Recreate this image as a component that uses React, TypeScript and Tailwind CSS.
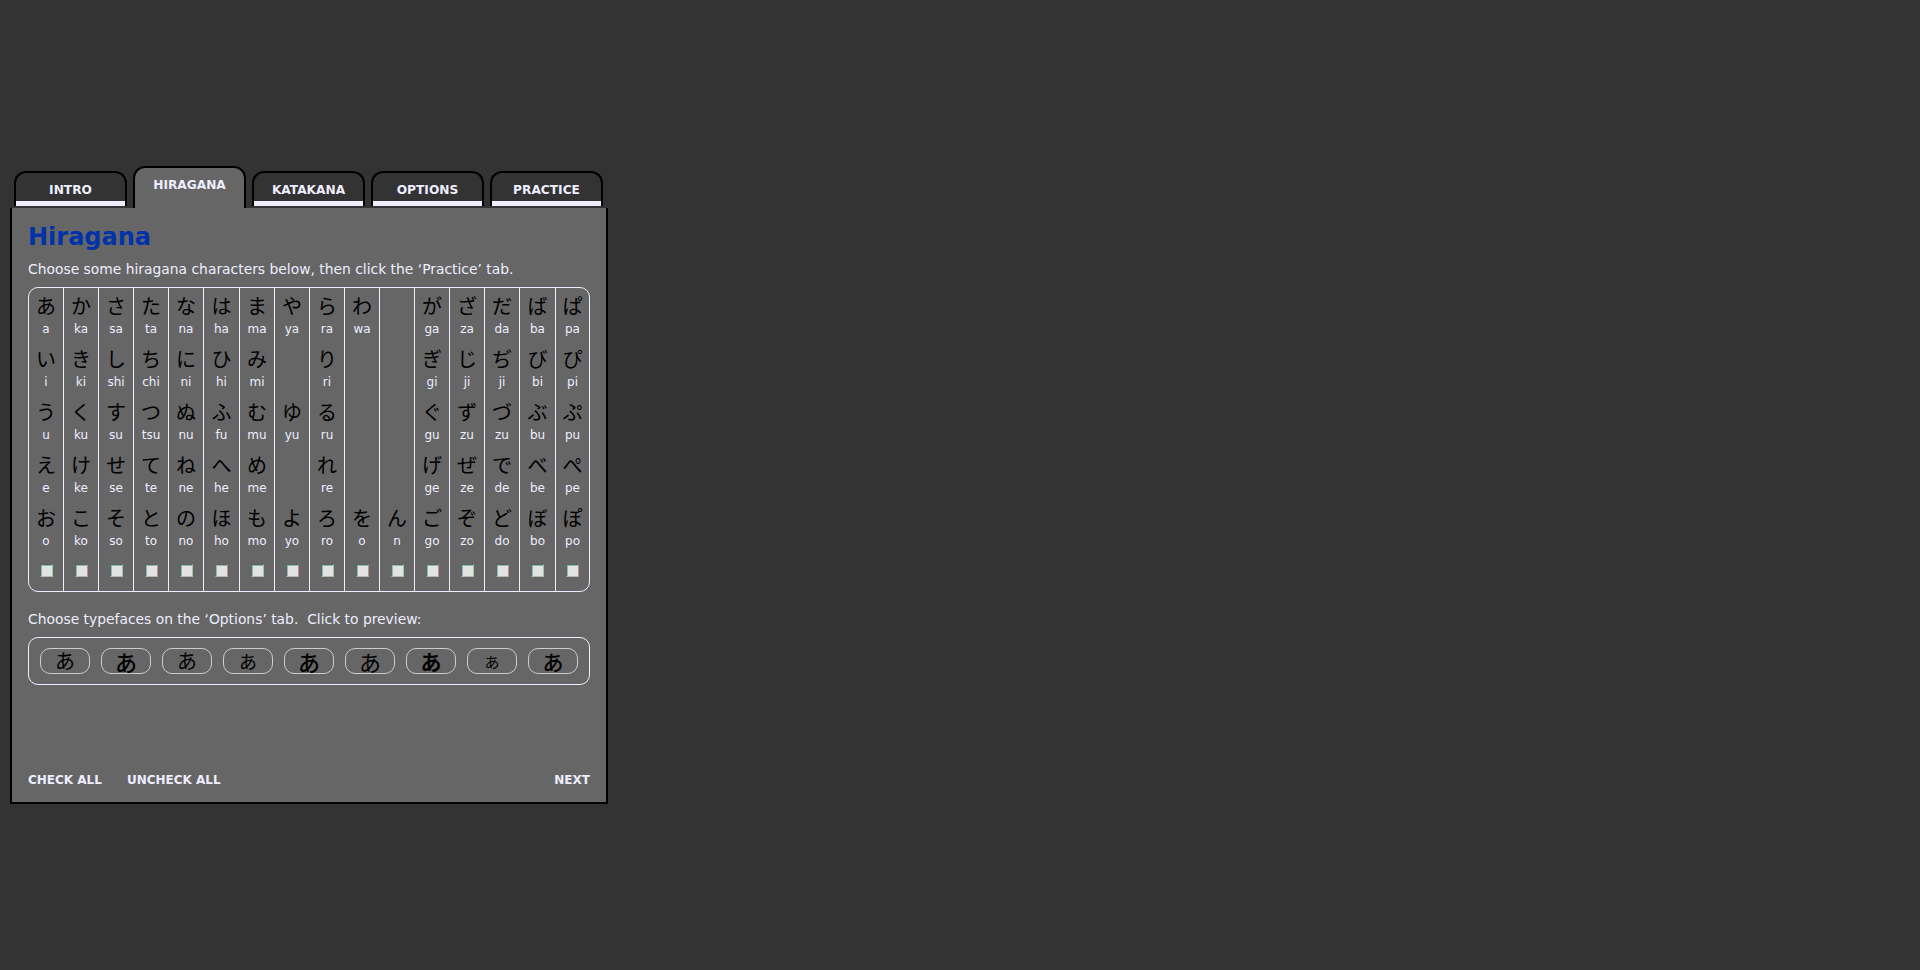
const rows: [string, string][][] = [
  [["あ","a"],["い","i"],["う","u"],["え","e"],["お","o"]],
  [["か","ka"],["き","ki"],["く","ku"],["け","ke"],["こ","ko"]],
  [["さ","sa"],["し","shi"],["す","su"],["せ","se"],["そ","so"]],
  [["た","ta"],["ち","chi"],["つ","tsu"],["て","te"],["と","to"]],
  [["な","na"],["に","ni"],["ぬ","nu"],["ね","ne"],["の","no"]],
  [["は","ha"],["ひ","hi"],["ふ","fu"],["へ","he"],["ほ","ho"]],
  [["ま","ma"],["み","mi"],["む","mu"],["め","me"],["も","mo"]],
  [["や","ya"],["",""],["ゆ","yu"],["",""],["よ","yo"]],
  [["ら","ra"],["り","ri"],["る","ru"],["れ","re"],["ろ","ro"]],
  [["わ","wa"],["",""],["",""],["",""],["を","o"]],
  [["",""],["",""],["",""],["",""],["ん","n"]],
  [["が","ga"],["ぎ","gi"],["ぐ","gu"],["げ","ge"],["ご","go"]],
  [["ざ","za"],["じ","ji"],["ず","zu"],["ぜ","ze"],["ぞ","zo"]],
  [["だ","da"],["ぢ","ji"],["づ","zu"],["で","de"],["ど","do"]],
  [["ば","ba"],["び","bi"],["ぶ","bu"],["べ","be"],["ぼ","bo"]],
  [["ぱ","pa"],["ぴ","pi"],["ぷ","pu"],["ぺ","pe"],["ぽ","po"]],
];
const tabs = ["INTRO","HIRAGANA","KATAKANA","OPTIONS","PRACTICE"];
const faces = ["font-normal text-[20px]","font-medium text-[22px]","font-normal text-[20px]","font-normal text-[18px]","font-medium text-[22px]","font-normal text-[22px]","font-bold text-[21px]","font-normal text-[15px]","font-medium text-[21px]"];
const greenEdge = "border-r-[#a0c8a0]";
const redEdge = "border-r-[#c09088]";

export default function App() {
  return (
    <div className="min-h-[970px] bg-[#333333] pt-[166px] pl-[10px] font-['DejaVu_Sans',sans-serif] text-[#eeeeff]">
      <div className="w-[598px]">
        <div className="flex h-[42px] items-start gap-[6px] pl-[4px]">
          {tabs.map((t) => t === "HIRAGANA" ? (
            <div key={t} className="flex h-[42px] w-[113px] justify-center rounded-t-[12px] border-2 border-b-0 border-black bg-[#666666] pt-[9px] text-[12.2px] leading-[16px] font-bold">{t}</div>
          ) : (
            <div key={t} className="mt-[5px] flex h-[35px] w-[113px] flex-col overflow-hidden rounded-t-[12px] border-2 border-b-0 border-black bg-[#333333]">
              <div className="flex h-[28px] items-start justify-center pt-[9px] text-[12.2px] leading-[16px] font-bold">{t}</div>
              <div className="h-[5px] bg-[#eeeeff]" />
            </div>
          ))}
        </div>
        <div className="flex h-[596px] flex-col border-2 border-t-0 border-black bg-[#666666] px-[16px] pt-[14px]">
          <h1 className="text-[24px] leading-[30px] font-bold text-[#0033aa]">Hiragana</h1>
          <p className="mt-[7px] text-[13.87px] leading-[20px]">Choose some hiragana characters below, then click the ‘Practice’ tab.</p>
          <div className="mt-[8px] flex h-[305px] w-[562px] rounded-[10px] border border-[#eeeeff]">
            {rows.map((col, i) => (
              <div key={i} className={`flex flex-col items-center border-[#eeeeff] ${i === 15 ? "flex-1" : "border-r"} ${i === 5 || i === 14 ? "w-[36px]" : "w-[35px]"}`}>
                {col.map(([k, r], j) => (
                  <div key={j} className="flex h-[53px] flex-col items-center pt-[3px]">
                    <span className="font-['Noto_Sans_CJK_JP',sans-serif] text-[20px] leading-[29px] text-black">{k}</span>
                    <span className="text-[12px] leading-[18px]">{r}</span>
                  </div>
                ))}
                <div className={`mt-[11px] h-[13px] w-[13px] border border-t-[#55655f] border-b-[#aebcaa] border-l-[#566a68] bg-[#e3e3e3] shadow-[inset_1px_1px_0_#8fb8b4] ${i % 2 === 1 ? redEdge : greenEdge}`} />
              </div>
            ))}
          </div>
          <p className="mt-[17px] text-[13.87px] leading-[20px] whitespace-pre">Choose typefaces on the ‘Options’ tab.  Click to preview:</p>
          <div className="mt-[8px] flex h-[48px] w-[562px] items-center justify-between rounded-[10px] border border-[#eeeeff] px-[11px]">
            {faces.map((f, i) => (
              <div key={i} className={`flex h-[26px] w-[50px] items-center justify-center rounded-[10px] border border-[#cccccc] font-['Noto_Sans_CJK_JP',sans-serif] leading-none text-black ${f}`}>あ</div>
            ))}
          </div>
          <div className="mt-auto mb-[13px] flex items-center text-[12px] leading-[18px] font-bold">
            <span>CHECK ALL</span>
            <span className="ml-[25px]">UNCHECK ALL</span>
            <span className="ml-auto">NEXT</span>
          </div>
        </div>
      </div>
    </div>
  );
}
